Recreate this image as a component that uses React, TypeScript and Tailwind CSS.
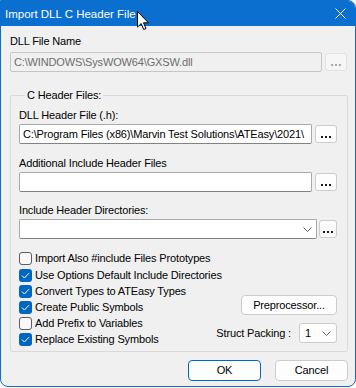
import React from "react";

const dots = (disabled?: boolean) => (
  <div className="flex gap-[2px]">
    {[0, 1, 2].map((i) => (
      <span key={i} className={`block w-[2px] h-[2px] ${disabled ? "bg-[#a8a8a8]" : "bg-[#1a1a1a]"}`} />
    ))}
  </div>
);

function DotsButton({ disabled, w = "w-[22px]" }: { disabled?: boolean; w?: string }) {
  return (
    <div
      className={`${w} h-[18px] shrink-0 rounded-[3px] border flex items-end justify-center pb-[4px] ${
        disabled ? "border-[#e2e2e2] bg-[#f6f6f6]" : "border-[#cccccc] bg-[#fdfdfd]"
      }`}
    >
      {dots(disabled)}
    </div>
  );
}

function Chevron() {
  return (
    <svg width="9" height="5" viewBox="0 0 9 5" className="shrink-0">
      <path d="M0.5 0.5 L4.5 4.5 L8.5 0.5" fill="none" stroke="#606060" strokeWidth="1" />
    </svg>
  );
}

function Check({ checked, label }: { checked?: boolean; label: string }) {
  return (
    <div className="flex items-center h-[16px] whitespace-nowrap">
      <div
        className={`w-[13px] h-[13px] shrink-0 rounded-[3px] flex items-center justify-center ${
          checked ? "bg-[#0067c0]" : "border border-[#5d5d5d] bg-[#f8f8f8]"
        }`}
      >
        {checked && (
          <svg width="9" height="7" viewBox="0 0 9 7">
            <path d="M1 3.6 L3.4 6 L8 1.2" fill="none" stroke="#ffffff" strokeWidth="1" />
          </svg>
        )}
      </div>
      <span className="ml-[3px] leading-[13px]">{label}</span>
    </div>
  );
}

export default function App() {
  return (
    <div className="w-[356px] h-[388px] bg-white font-['Liberation_Sans',Arial,sans-serif] text-[11px] text-black tracking-[-0.15px] relative">
      <div className="w-[356px] h-[387px] border border-[#0a6fcf] rounded-tr-[8px] rounded-b-[8px] bg-[#f0f0f0] overflow-hidden flex flex-col">
        {/* title bar */}
        <div className="h-[25px] shrink-0 bg-[#0a6fcf] flex items-center justify-between pl-[4px] pr-[9px]">
          <span className="text-white text-[11.5px] leading-[14px] tracking-normal">Import DLL C Header File</span>
          <svg width="11" height="11" viewBox="0 0 11 11">
            <path d="M0.5 0.5 L10.5 10.5 M10.5 0.5 L0.5 10.5" stroke="#ffffff" strokeWidth="1" />
          </svg>
        </div>

        {/* body */}
        <div className="flex flex-col pt-[9px] pl-[9px]">
          <div className="leading-[13px]">DLL File Name</div>
          <div className="flex items-center gap-[3px] mt-[4px]">
            <div className="w-[312px] h-[20px] border border-[#c6c6c6] rounded-[2px] bg-[#f0f0f0] text-[#6d6d6d] flex items-center pl-[3px] leading-[13px]">
              C:\WINDOWS\SysWOW64\GXSW.dll
            </div>
            <DotsButton disabled />
          </div>

          <fieldset className="mt-[17px] w-[338px] border border-[#dadada] rounded-[2px] pl-[8px] pr-[10px] pb-[4px]">
            <legend className="ml-[6px] px-[2px] leading-[13px]">C Header Files:</legend>

            <div className="mt-[7px] leading-[13px]">DLL Header File (.h):</div>
            <div className="flex items-center gap-[3px] mt-[2px]">
              <div className="w-[293px] h-[20px] border border-[#a9a9a9] border-b-[#828282] rounded-[2px] bg-white flex items-center pl-[3px] leading-[13px] overflow-hidden whitespace-nowrap">
                C:\Program Files (x86)\Marvin Test Solutions\ATEasy\2021\
              </div>
              <DotsButton />
            </div>

            <div className="mt-[13px] leading-[13px]">Additional Include Header Files</div>
            <div className="flex items-center gap-[3px] mt-[2px]">
              <div className="w-[293px] h-[20px] border border-[#a9a9a9] border-b-[#828282] rounded-[2px] bg-white" />
              <DotsButton />
            </div>

            <div className="mt-[12px] leading-[13px]">Include Header Directories:</div>
            <div className="flex items-center gap-[2px] mt-[2px]">
              <div className="w-[298px] h-[20px] border border-[#a9a9a9] border-b-[#828282] rounded-[2px] bg-white flex items-center justify-end pr-[4px]">
                <Chevron />
              </div>
              <DotsButton w="w-[18px]" />
            </div>

            <div className="flex mt-[11px]">
              <div className="flex flex-col w-0 grow">
                <div className="mb-[1px]">
                  <Check label="Import Also #include Files Prototypes" />
                </div>
                <Check checked label="Use Options Default Include Directories" />
                <Check checked label="Convert Types to ATEasy Types" />
                <Check checked label="Create Public Symbols" />
                <Check label="Add Prefix to Variables" />
                <Check checked label="Replace Existing Symbols" />
              </div>
              <div className="flex flex-col items-end pt-[45px] shrink-0">
                <div className="w-[96px] h-[20px] rounded-[4px] border border-[#cccccc] bg-[#fdfdfd] flex items-center justify-center leading-[13px] whitespace-nowrap">
                  Preprocessor...
                </div>
                <div className="flex items-center mt-[8px] whitespace-nowrap">
                  <span className="leading-[13px] mr-[8px]">Struct Packing :</span>
                  <div className="w-[38px] h-[20px] border border-[#cccccc] rounded-[3px] bg-[#fdfdfd] flex items-center justify-between pl-[5px] pr-[5px]">
                    <span className="leading-[13px]">1</span>
                    <Chevron />
                  </div>
                </div>
              </div>
            </div>
          </fieldset>

          <div className="flex justify-end gap-[14px] mt-[8px] w-[338px]">
            <div className="w-[73px] h-[21px] rounded-[4px] border border-[#0067c0] bg-[#fdfdfd] flex items-center justify-center leading-[13px]">
              OK
            </div>
            <div className="w-[73px] h-[21px] rounded-[4px] border border-[#cccccc] bg-[#fdfdfd] flex items-center justify-center leading-[13px]">
              Cancel
            </div>
          </div>
        </div>
      </div>

      {/* mouse pointer over the title bar */}
      <svg width="13" height="20" viewBox="0 0 13 20" className="absolute left-[137px] top-[11px]">
        <path d="M0.5 0.5 L0.5 16 L4.2 12.6 L6.7 18.5 L9 17.5 L6.5 11.8 L11.5 11.8 Z" fill="#ffffff" stroke="#000000" strokeWidth="1" strokeLinejoin="round" />
      </svg>
    </div>
  );
}
